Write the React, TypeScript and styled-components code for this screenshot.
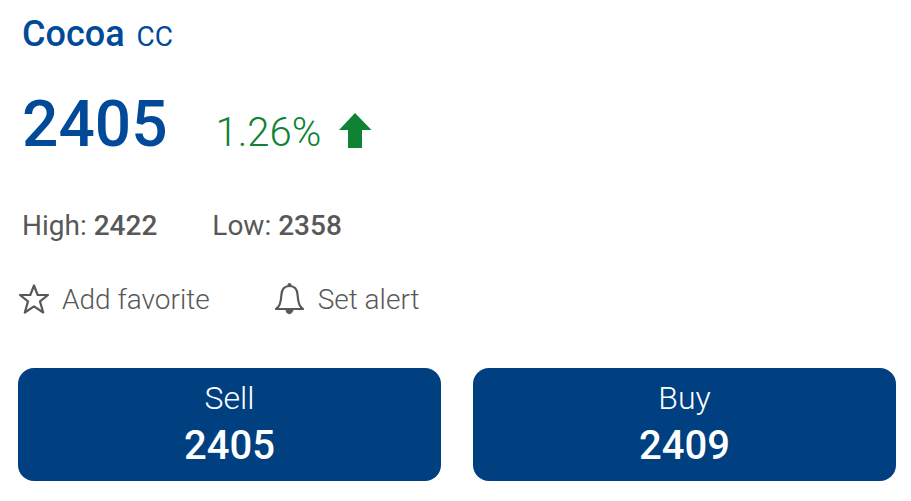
import React from "react";
import styled, { createGlobalStyle } from "styled-components";

const GlobalStyle = createGlobalStyle`
  * { box-sizing: border-box; }
  body { margin: 0; background: #fff; font-family: Roboto, sans-serif; color: #585858; }
  button { font-family: inherit; border: 0; cursor: pointer; }
`;
const Card = styled.main`
  padding: 14px 15px 20px 18px;
`;
const Title = styled.header`
  display: flex;
  align-items: baseline;
  gap: 12px;
  padding-left: 4px;
  line-height: 40px;
  color: #004a99;
`;
const Name = styled.h1`
  margin: 0;
  font-size: 36px;
  font-weight: 500;
`;
const Symbol = styled.span`
  font-size: 28px;
`;
const Quote = styled.section`
  display: flex;
  align-items: baseline;
  margin-top: 30px;
  padding-left: 4px;
  line-height: 76px;
`;
const Price = styled.strong`
  font-size: 64px;
  font-weight: 500;
  color: #004a99;
`;
const Change = styled.span`
  margin-left: 48px;
  font-size: 40px;
  font-weight: 300;
  color: #0f8234;
`;
const Arrow = styled.svg`
  align-self: flex-end;
  width: 34px;
  height: 36px;
  margin: 0 0 23px 17px;
`;
const Range = styled.section`
  display: flex;
  gap: 55px;
  margin-top: 38px;
  padding-left: 4px;
  font-size: 28px;
  line-height: 34px;
  strong { font-weight: 500; }
`;
const Actions = styled.div`
  display: flex;
  gap: 64px;
  margin-top: 40px;
`;
const Action = styled.button`
  display: flex;
  align-items: center;
  gap: 12px;
  padding: 0;
  background: none;
  color: #585858;
  font-size: 28px;
  font-weight: 300;
  line-height: 34px;
`;
const Icon = styled.svg`
  width: 32px;
  height: 34px;
  fill: none;
  stroke: #585858;
  stroke-width: 2;
`;
const Trades = styled.div`
  display: grid;
  grid-template-columns: 1fr 1fr;
  gap: 32px;
  margin-top: 51px;
`;
const Trade = styled.button`
  display: flex;
  flex-direction: column;
  align-items: center;
  padding: 10px 0 8px;
  border-radius: 16px;
  background: #004080;
  color: #fff;
  font-size: 32px;
  font-weight: 300;
  line-height: 40px;
  strong { font-size: 40px; font-weight: 500; line-height: 55px; }
`;

export default function App() {
  return (
    <>
      <GlobalStyle />
      <Card>
        <Title><Name>Cocoa</Name><Symbol>CC</Symbol></Title>
        <Quote>
          <Price>2405</Price>
          <Change>1.26%</Change>
          <Arrow viewBox="0 0 34 36" aria-hidden="true"><path d="M17 1 33.5 18H24V36H10V18H1Z" fill="#0f8234" /></Arrow>
        </Quote>
        <Range>
          <span>High: <strong>2422</strong></span>
          <span>Low: <strong>2358</strong></span>
        </Range>
        <Actions>
          <Action>
            <Icon viewBox="0 0 32 34" aria-hidden="true"><path d="M16 2.5 19.7 12H30L22 18.4 25.2 29.5 16 23.4 6.8 29.5 10 18.4 2 12H12.3Z" strokeWidth="2.2" strokeLinejoin="round" /></Icon>
            Add favorite
          </Action>
          <Action>
            <Icon viewBox="0 0 32 34" aria-hidden="true">
              <path d="M2 26H29C24.6 23.5 23.9 18 23.6 12C23.3 6 20 3 15.5 3S7.7 6 7.4 12C7.1 18 6.4 23.5 2 26Z" strokeWidth="2.2" strokeLinejoin="round" />
              <path d="M14 3V1.5C14 0 17 0 17 1.5V3M12 27C12.5 32.5 18.5 31.5 19 27Z" fill="#585858" strokeWidth="1" />
            </Icon>
            Set alert
          </Action>
        </Actions>
        <Trades>
          <Trade>Sell<strong>2405</strong></Trade>
          <Trade>Buy<strong>2409</strong></Trade>
        </Trades>
      </Card>
    </>
  );
}
